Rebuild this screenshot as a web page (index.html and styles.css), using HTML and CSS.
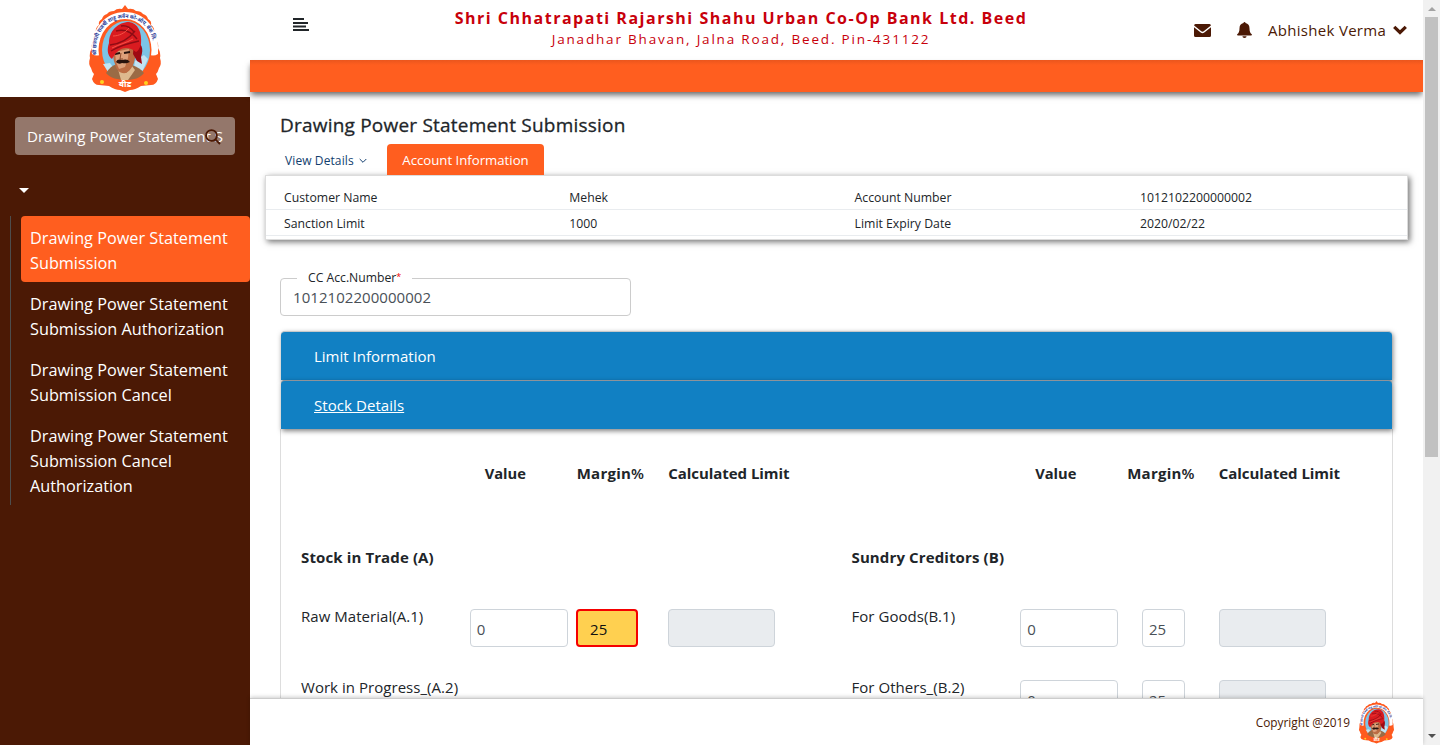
FILE: index.html
```html
<!DOCTYPE html>
<html lang="en">
<head>
<meta charset="utf-8">
<title>Drawing Power Statement Submission</title>
<link rel="stylesheet" href="styles.css">
</head>
<body>
<svg class="defs" width="0" height="0" aria-hidden="true">
  <symbol id="emblem" viewBox="0 0 74 88">
    <path d="M37 0l3 4q5-1 8 2 5 0 7 3 4 1 5 5 4 2 3 6 4 3 3 7 3 4 2 8 3 4 2 8 3 5 2 10 2 6-1 10-1 4-3 6l2 5q-2 6-7 6l-10 1q-6 4-11 4l-5 2-5-2q-5 0-11-4l-10-1q-5 0-7-6l2-5q-2-2-3-6-3-4-1-10-1-5 2-10-1-4 2-8-1-4 2-8-1-4 3-7-1-4 3-6 1-4 5-5 2-3 7-3 3-3 8-2z" fill="#ff5a1f"/>
    <path d="M4 49C2 24 17 7 37 7s35 17 33 42q-5 3-10 0V42H14v7q-5 3-10 0z" fill="#fff"/>
    <ellipse cx="37" cy="45" rx="26.500" ry="31" fill="#ff5a1f"/>
    <ellipse cx="38" cy="45" rx="24" ry="29" fill="#7cc4e6"/>
    <path d="M47 56l9-6 4 4-6 13-9 3z" fill="#c4e4f2"/>
    <path d="M15 59l7-1 5 7-7 2z" fill="#c4e4f2"/>
    <path d="M18 68c3-5 7-8 11-9l15 1c5 2 9 4 12 8-4 5-10 7-18 7s-16-2-20-7z" fill="#9a6b45"/>
    <path d="M30 64l8 4 6-7 3 4-7 10h-7z" fill="#ddb98e"/>
    <path d="M25 45l21-5 1 13c-1 7-4 12-9 15-6 1-10-3-11-9-2-4-2-10-2-14z" fill="#bc6c43"/>
    <path d="M27 47l14-3-1 9-3 9-6 2-3-7z" fill="#dda07a"/>
    <path d="M27 49l5-1M36 48l6-1" stroke="#27130e" stroke-width="1.800"/>
    <path d="M33 48l-1 6h3" stroke="#8d4a2c" fill="none"/>
    <path d="M28 57c1-3 4-3 6-2 3-1 6-1 8 2-4 2-6 1-8 1-2 1-4 1-6-1z" fill="#28120d"/>
    <path d="M46 36c8 1 10 8 7 16l1 7-5-3-4-7z" fill="#9f0912"/>
    <path d="M24 54c-5-4-5-10-3-16 0-12 9-21 20-21 9 1 13 10 12 22-1 4-3 7-5 8-4-3-6-4-10-4-6 0-10 4-14 11z" fill="#d91b20"/>
    <path d="M22 40c9-1 18-5 25-14M23 46c10-6 18-8 28-10M28 26c7-2 15 0 21 8M33 21c5-1 9 1 13 6" stroke="#8d0c14" stroke-width="1.400" fill="none"/>
    <path d="M25 31c6 0 12-3 16-8M24 43c8-4 14-5 21-9" stroke="#f55346" fill="none"/>
    <circle cx="14" cy="77" r="2" fill="#ffd21f"/><circle cx="58" cy="78" r="2" fill="#ffd21f"/>
    <path id="arc" d="M8.500 50C6 27 20 13 37 13s31 14 28.500 37" fill="none"/>
    <text class="emblem-ring"><textPath href="#arc" textLength="92" lengthAdjust="spacingAndGlyphs">श्री छत्रपती राजर्षी शाहू अर्बन को-ऑप. बँक लि.</textPath></text>
    <text class="emblem-name" x="37" y="82">बीड</text>
  </symbol>
</svg>
<div class="app">
  <aside class="sidebar">
    <div class="brand"><svg class="brand-logo"><use href="#emblem"/></svg></div>
    <div class="search">
      <span class="search-text">Drawing Power Statement S</span>
      <svg class="search-icon" viewBox="0 0 16 16"><circle cx="6.500" cy="6.500" r="5.400"/><path d="M10.300 10.300L15 15"/></svg>
    </div>
    <div class="caret"></div>
    <nav class="menu">
      <a class="menu-item active">Drawing Power Statement<br>Submission</a>
      <a class="menu-item">Drawing Power Statement<br>Submission Authorization</a>
      <a class="menu-item">Drawing Power Statement<br>Submission Cancel</a>
      <a class="menu-item">Drawing Power Statement<br>Submission Cancel<br>Authorization</a>
    </nav>
  </aside>
  <div class="main">
    <header class="topbar">
      <svg class="burger" viewBox="0 0 16 14"><path d="M0 1h11M0 5h15M0 8.500h13M0 12h16"/></svg>
      <div class="bank">
        <div class="bank-name">Shri Chhatrapati Rajarshi Shahu Urban Co-Op Bank Ltd. Beed</div>
        <div class="bank-address">Janadhar Bhavan, Jalna Road, Beed. Pin-431122</div>
      </div>
      <div class="user">
        <svg class="mail" viewBox="0 0 17 13"><path d="M1.500 0h14a1.500 1.500 0 0 1 1.400 1.600L9.700 7.200a2 2 0 0 1-2.400 0L.1 1.600A1.500 1.500 0 0 1 1.500 0zM0 3.300l6.700 5.200a3 3 0 0 0 3.600 0L17 3.300v8.200a1.500 1.500 0 0 1-1.500 1.500h-14A1.500 1.500 0 0 1 0 11.500z"/></svg>
        <svg class="bell" viewBox="0 0 15 16"><path d="M7.500 0a1 1 0 0 1 1 1c2.700.5 4 2.600 4 5.200 0 3.500.8 4.700 2 5.700.9.700.5 1.700-.5 1.700H1c-1 0-1.400-1-.5-1.700 1.200-1 2-2.200 2-5.700 0-2.600 1.300-4.700 4-5.200a1 1 0 0 1 1-1zM5.400 14.300h4.200a2.100 1.700 0 0 1-4.200 0z"/></svg>
        <span class="user-name">Abhishek Verma</span>
        <svg class="chev" viewBox="0 0 14 10"><path d="M1.200 1.800L7 7.500l5.800-5.700"/></svg>
      </div>
    </header>
    <div class="ribbon"></div>
    <main class="content">
      <h1 class="title">Drawing Power Statement Submission</h1>
      <div class="tabs">
        <a class="tab view"><span>View Details</span><svg viewBox="0 0 8 6"><path d="M.7 1L4 4.300 7.300 1"/></svg></a>
        <a class="tab current"><span>Account Information</span></a>
      </div>
      <section class="info">
        <div class="info-row"><span>Customer Name</span><span>Mehek</span><span>Account Number</span><span>1012102200000002</span></div>
        <div class="info-row"><span>Sanction Limit</span><span>1000</span><span>Limit Expiry Date</span><span>2020/02/22</span></div>
      </section>
      <fieldset class="field"><legend>CC Acc.Number<sup>*</sup></legend><span class="digits">1012102200000002</span></fieldset>
      <section class="accordion">
        <div class="acc-head"><span>Limit Information</span></div>
        <div class="acc-head open"><span>Stock Details</span></div>
        <div class="panel">
          <div class="half">
            <div class="cols heads"><span></span><b>Value</b><b>Margin<i>%</i></b><b>Calculated Limit</b></div>
            <div class="group">Stock in Trade (A)</div>
            <div class="cols line"><span>Raw Material(A.1)</span><div class="input value">0</div><div class="input hot">25</div><div class="input calc"></div></div>
            <div class="cols line"><span>Work in Progress_(A.2)</span></div>
          </div>
          <div class="half">
            <div class="cols heads"><span></span><b>Value</b><b>Margin<i>%</i></b><b>Calculated Limit</b></div>
            <div class="group">Sundry Creditors (B)</div>
            <div class="cols line"><span>For Goods(B.1)</span><div class="input value">0</div><div class="input margin">25</div><div class="input calc"></div></div>
            <div class="cols line"><span>For Others_(B.2)</span><div class="input value">0</div><div class="input margin">25</div><div class="input calc"></div></div>
          </div>
        </div>
      </section>
    </main>
    <footer class="footer"><span>Copyright @2019</span><svg class="footer-logo"><use href="#emblem"/></svg></footer>
  </div>
  <div class="scrollbar"><i class="arrow up"></i><div class="thumb"></div><i class="arrow down"></i></div>
</div>
</body>
</html>
```
FILE: styles.css
```css
* { box-sizing: border-box; }
body { margin: 0; font: 15px/24px "Open Sans", "Noto Sans", sans-serif; color: #212529; background: #fff; }
.defs { position: absolute; }
.app { display: flex; width: 1440px; height: 745px; overflow: hidden; }

.sidebar { width: 250px; background: #4b1905; color: #fff; }
.brand { height: 97px; background: #fff; display: flex; justify-content: center; padding-top: 5px; }
.brand-logo { width: 74px; height: 88px; }
.emblem-ring { font: 700 5.5px "Noto Sans", sans-serif; fill: #2b3c99; }
.emblem-name { font: 700 8.5px "Noto Sans", sans-serif; fill: #fff; text-anchor: middle; }
.search { position: relative; margin: 20px 15px 0; height: 38px; padding: 7px 12px; background: #94776b; border-radius: 4px; }
.search-text { display: block; width: 200px; white-space: nowrap; font-size: 15.1px; line-height: 25px; }
.search-icon { position: absolute; left: 190px; top: 12px; width: 16px; height: 16px; fill: none; stroke: #4b1905; stroke-width: 1.9; }
.caret { width: 0; margin: 33px 0 0 19px; border: 5.5px solid transparent; border-top-color: #fff; border-bottom: 0; }
.menu { margin: 22.5px 0 0 10px; padding-left: 10px; border-left: 1px solid #4d4d4d; height: 289px; }
.menu-item { display: block; padding: 10px 9px 6px; font-size: 16.25px; line-height: 25px; white-space: nowrap; }
.menu-item.active { background: #ff5e1f; border-radius: 4px; }

.main { width: 1173px; display: flex; flex-direction: column; }
.topbar { height: 60px; flex: none; display: grid; grid-template-columns: 43px 885px 245px; }
.burger { width: 16px; height: 14px; margin: 18px 0 0 43px; stroke: #212529; stroke-width: 2; }
.bank { text-align: center; color: #c8000b; padding: 8px 0 0 11px; white-space: nowrap; }
.bank-name { font-size: 16px; line-height: 21px; font-weight: 700; letter-spacing: 1.5px; }
.bank-address { font-size: 13.5px; line-height: 20px; letter-spacing: 1.82px; }
.user { display: flex; align-items: center; padding-left: 16px; color: #4b1905; fill: #4b1905; white-space: nowrap; }
.user-name { letter-spacing: .3px; }
.mail { width: 17px; height: 13px; margin-right: 26px; }
.bell { width: 15px; height: 16px; margin-right: 16px; }
.chev { width: 14px; height: 10px; margin-left: 7px; fill: none; stroke: #4b1905; stroke-width: 3.2; }
.ribbon { height: 32px; flex: none; background: linear-gradient(#ea561d, #ff5e1f 5px); box-shadow: 0 4px 6px -1px rgba(0,0,0,.6); }

.content { flex: 1; min-height: 0; overflow: hidden; padding: 21px 30px 0; }
.title { margin: 0; font-size: 19px; line-height: 24px; font-weight: 500; letter-spacing: .21px; -webkit-text-stroke: .3px #212529; white-space: nowrap; }
.tabs { display: flex; margin-top: 7px; height: 31px; line-height: 32px; }
.tab.view { width: 107px; padding-left: 5px; padding-top: 2px; font-size: 12px; letter-spacing: .1px; color: #123e6e; display: flex; align-items: center; gap: 5px; }
.tab.view svg { width: 8px; height: 6px; fill: none; stroke: #123e6e; }
.tab.current { width: 157px; text-align: center; font-size: 13.2px; color: #fff; background: #ff5e1f; border-radius: 4px 4px 0 0; white-space: nowrap; }
.info { width: 1143px; height: 65px; margin-left: -15px; padding-top: 9px; background: #fff; border: 1px solid #dcdcdc; box-shadow: 2px 2px 6px rgba(0,0,0,.55); font-size: 12.25px; }
.info-row { display: grid; grid-template-columns: repeat(4, 285.3px); padding-left: 18px; height: 26px; line-height: 27px; border-bottom: 1px solid #e9ecef; white-space: nowrap; overflow: hidden; }
.info-row:first-child { height: 25px; line-height: 25px; }
.field { width: 351px; height: 48px; margin: 28px 0 0; padding: 0 12px; border: 1px solid #ccc; border-radius: 4px; color: #495057; }
.field legend { margin-left: 4px; padding: 0 11px; height: 20px; line-height: 19px; font-size: 12.2px; color: #212529; white-space: nowrap; }
.field sup { font-size: 9px; line-height: 0; vertical-align: 2px; color: #e00; }
.field .digits { display: block; line-height: 18px; letter-spacing: .05px; }
.accordion { width: 1113px; margin-top: 15px; }
.acc-head { position: relative; height: 49px; margin: 0 1px; padding: 0 33px; line-height: 49px; color: #fff; background: #1180c3; border-top: 1px solid #8e9399; border-radius: 4px 4px 0 0; box-shadow: 1px 2px 5px rgba(0,0,0,.5); }
.acc-head:first-child { border-top-color: #c4c8cb; }
.acc-head.open { text-decoration: underline; letter-spacing: .07px; }
.panel { display: flex; height: 400px; padding: 32px 0 0 20px; border: 1px solid #ddd; border-top: 0; }
.half { width: 550.5px; flex: none; }
.cols { display: grid; grid-template-columns: 168.7px 106.6px 92px 140px; white-space: nowrap; }
.heads { height: 84px; }
.heads b:nth-child(2) { padding-left: 15px; font-size: 14.7px; }
.heads b:nth-child(3) { letter-spacing: .25px; padding-left: .4px; }
.heads b:nth-child(4) { letter-spacing: -.05px; }
.heads i { font-style: normal; font-weight: 600; }
.group { height: 59px; font-weight: 700; letter-spacing: .12px; }
.line { height: 71px; letter-spacing: .04px; }
.line .input { margin-top: 5px; }
.input { height: 38px; padding: 0 6px; line-height: 39px; border: 1px solid #ced4da; border-radius: 4px; color: #495057; }
.value { width: 98px; }
.line .margin { width: 43px; margin-left: 15.2px; }
.hot { width: 62px; margin-left: -.2px; padding-left: 12px; line-height: 37px; color: #111; background: #ffd050; border: 2px solid #f50000; }
.calc { width: 107px; background: #e9ecef; }
.footer { position: relative; height: 47px; flex: none; display: flex; align-items: center; justify-content: flex-end; gap: 8px; padding-right: 28px; background: #fff; border-top: 1px solid #ccc; box-shadow: 0 -1px 4px rgba(0,0,0,.2); font-size: 11.85px; color: #4b1905; }
.footer-logo { width: 37px; height: 43px; }

.scrollbar { width: 17px; display: flex; flex-direction: column; align-items: center; background: #f1f1f1; }
.thumb { width: 13px; height: 440px; margin: 6px 0 auto; background: #c1c1c1; }
.arrow { border: 4px solid transparent; }
.up { margin-top: 7px; border-top: 0; border-bottom-color: #a3a3a3; }
.down { margin-bottom: 7px; border-bottom: 0; border-top-color: #505050; }
```
